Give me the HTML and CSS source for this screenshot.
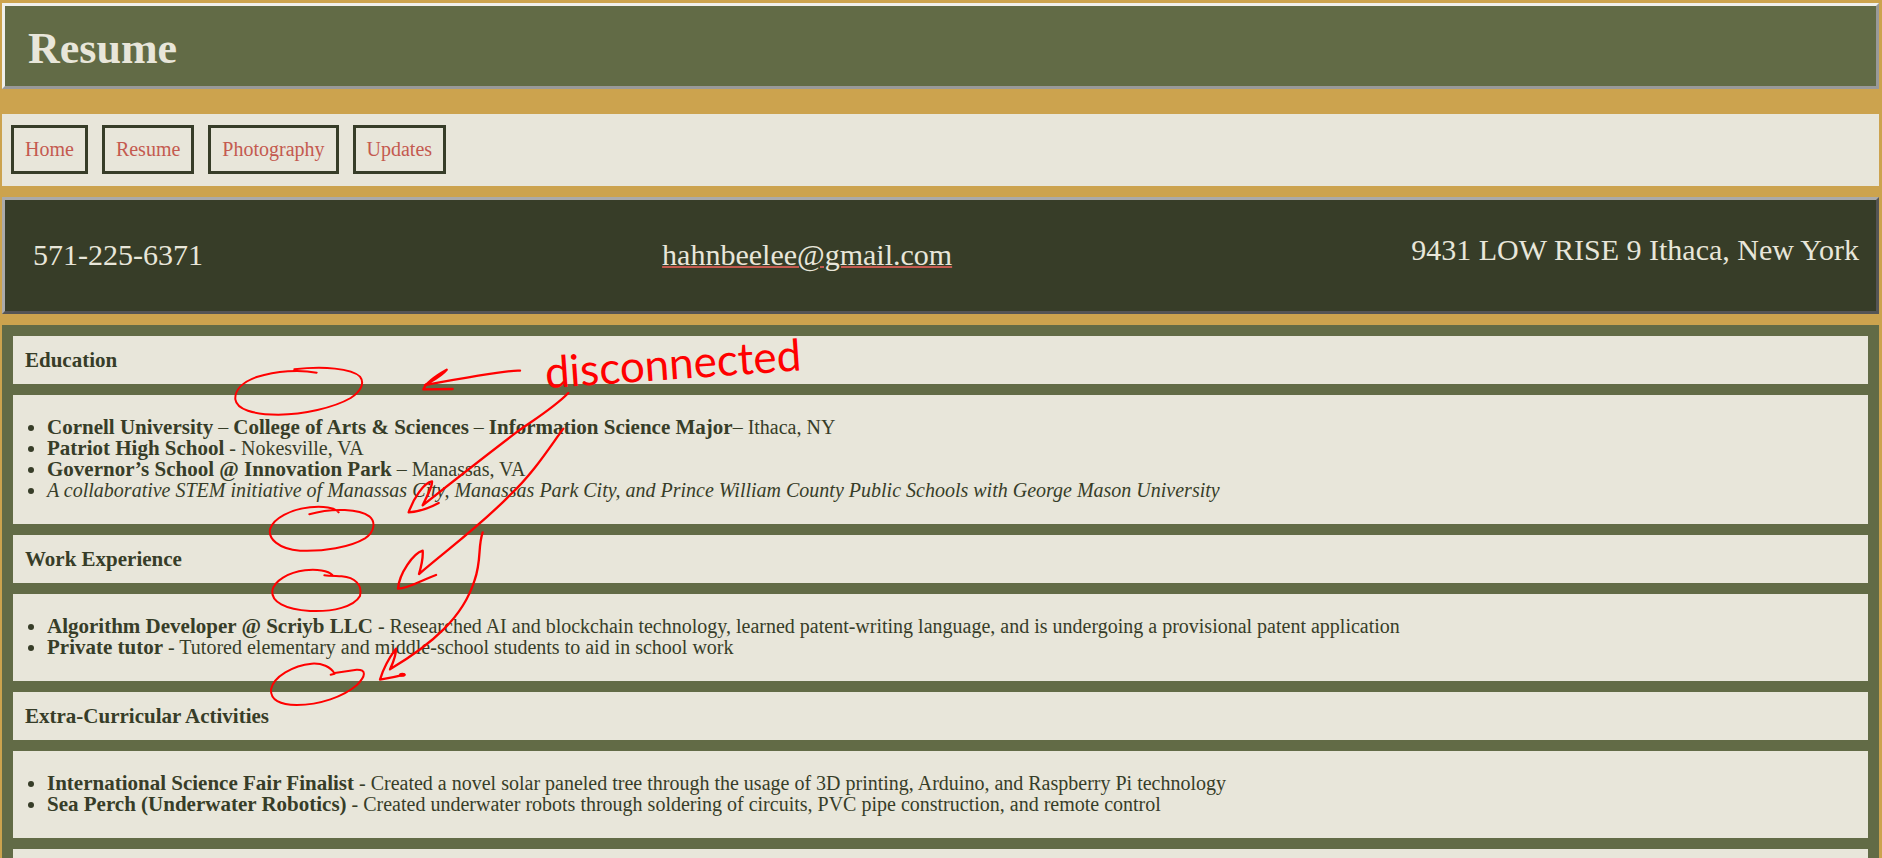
FILE: index.html
```html
<!DOCTYPE html>
<html lang="en">
<head>
<meta charset="utf-8">
<title>Resume</title>
<link rel="stylesheet" href="styles.css">
</head>
<body>
<header class="banner"><h1>Resume</h1></header>
<nav class="menu">
  <a href="#home">Home</a>
  <a href="#resume">Resume</a>
  <a href="#photography">Photography</a>
  <a href="#updates">Updates</a>
</nav>
<section class="contact">
  <p>571-225-6371</p>
  <p><a href="mailto:hahnbeelee@gmail.com">hahnbeelee@gmail.com</a></p>
  <p class="address">9431 LOW RISE 9 Ithaca, New York</p>
</section>
<main class="sections">
  <h2>Education</h2>
  <ul>
    <li><strong>Cornell University</strong> – <strong>College of Arts &amp; Sciences</strong> – <strong>Information Science Major</strong>– Ithaca, NY</li>
    <li><strong>Patriot High School</strong> - Nokesville, VA</li>
    <li><strong>Governor’s School @ Innovation Park</strong> – Manassas, VA</li>
    <li><em>A collaborative STEM initiative of Manassas City, Manassas Park City, and Prince William County Public Schools with George Mason University</em></li>
  </ul>
  <h2>Work Experience</h2>
  <ul>
    <li><strong>Algorithm Developer @ Scriyb LLC</strong> - Researched AI and blockchain technology, learned patent-writing language, and is undergoing a provisional patent application</li>
    <li><strong>Private tutor</strong> - Tutored elementary and middle-school students to aid in school work</li>
  </ul>
  <h2>Extra-Curricular Activities</h2>
  <ul>
    <li><strong>International Science Fair Finalist</strong> - Created a novel solar paneled tree through the usage of 3D printing, Arduino, and Raspberry Pi technology</li>
    <li><strong>Sea Perch (Underwater Robotics)</strong> - Created underwater robots through soldering of circuits, PVC pipe construction, and remote control</li>
  </ul>
  <div class="next"></div>
</main>
<svg class="markup" width="1882" height="858" viewBox="0 0 1882 858">
  <g transform="translate(200 320) scale(0.33333)">
    <!-- circles round the gaps -->
    <path d="M350 158C300 148 230 152 170 171C125 187 104 212 106 238C110 268 160 284 235 284C310 283 400 264 452 234C485 212 494 188 480 170C455 145 370 138 283 148"/>
    <path d="M416 577C405 563 370 558 330 562C270 568 222 595 211 625C202 655 235 687 300 692C370 695 450 682 495 655C525 635 527 605 508 589C480 568 400 562 328 583"/>
    <path d="M397 765C385 752 350 747 315 751C265 757 222 783 217 812C213 845 255 869 330 873C400 876 462 860 480 828C488 795 465 772 425 769C405 768 388 768 373 766"/>
    <path d="M392 1064L404 1061C392 1040 365 1029 335 1031C280 1036 220 1070 213 1108C211 1140 240 1155 290 1155C360 1155 430 1130 470 1096C498 1068 500 1048 470 1049L404 1059"/>
    <!-- arrows -->
    <path class="arrow" d="M960 152C930 148 800 172 675 195C700 180 725 168 740 149C715 163 680 183 670 208L758 207"/>
    <path class="arrow" d="M1105 219C1060 265 1000 300 945 340C860 405 760 483 668 556C680 530 698 500 696 484C672 488 640 535 626 577C660 575 690 563 716 549"/>
    <path class="arrow" d="M1090 326C1050 380 1000 460 930 525C840 618 740 690 657 762C665 735 670 715 668 692C640 700 598 760 594 806C630 804 660 782 708 765"/>
    <path class="arrow" d="M848 637C833 680 845 720 824 780C790 890 700 970 570 1048C578 1030 588 1010 588 986C570 1010 550 1045 540 1079C565 1075 590 1070 613 1064"/>
    <ellipse class="dot" cx="607" cy="1064" rx="10" ry="6"/>
  </g>
  <text class="note" transform="rotate(-4 550 388)" x="546" y="388">disconnected</text>
</svg>
</body>
</html>
```
FILE: styles.css
```css
body {
  box-sizing: border-box;
  height: 100vh;
  margin: 0;
  padding: 3px 3px 0 2px;
  overflow: hidden;
  background: #cca34e;
  color: #373d28;
  font: 20px/21px Georgia, "Liberation Serif", serif;
}

h1, h2, p, ul {
  margin: 0;
}

.banner {
  padding: 18px 23px 12px;
  border: 3px solid;
  border-color: #f0f0ec #999 #999 #f0f0ec;
  background: #626b46;
  color: #e8e6da;
}

.banner h1 {
  font-size: 44px;
  line-height: 50px;
}

.menu {
  display: flex;
  gap: 14px;
  margin-top: 25px;
  padding: 11px 9px 12px;
  background: #e8e6da;
}

.menu a {
  padding: 11px;
  border: 3px solid #373d28;
  color: #c45a4f;
  text-decoration: none;
}

.contact {
  display: flex;
  justify-content: space-between;
  align-items: center;
  margin: 11px 0;
  padding: 37px 17px 38px 28px;
  border: 3px solid;
  border-color: #aaa #555 #555 #aaa;
  background: #373d28;
  color: #e8e6da;
  font-size: 30px;
  line-height: 36px;
}

.contact a {
  color: inherit;
  text-decoration: underline #c45a4f 2px;
}

.address {
  margin-bottom: 10px;
  line-height: 26px;
}

.sections {
  display: grid;
  gap: 11px;
  padding: 11px;
  background: #626b46;
}

.sections h2 {
  padding: 12px;
  background: #e8e6da;
  font-size: 21px;
  line-height: 24px;
}

.sections ul {
  padding: 22px 12px 23px 34px;
  background: #e8e6da;
}

.sections strong {
  font-size: 21px;
  line-height: 20px;
}

.next {
  height: 48px;
  background: #e8e6da;
}

.markup {
  position: absolute;
  top: 0;
  left: 0;
  pointer-events: none;
}

.markup path {
  fill: none;
  stroke: #f00;
  stroke-width: 6;
  stroke-linecap: round;
  stroke-linejoin: round;
}

.markup .arrow {
  stroke-width: 7;
}

.dot,
.note {
  fill: #f00;
}

.note {
  font: 44px Lato, sans-serif;
}
```
